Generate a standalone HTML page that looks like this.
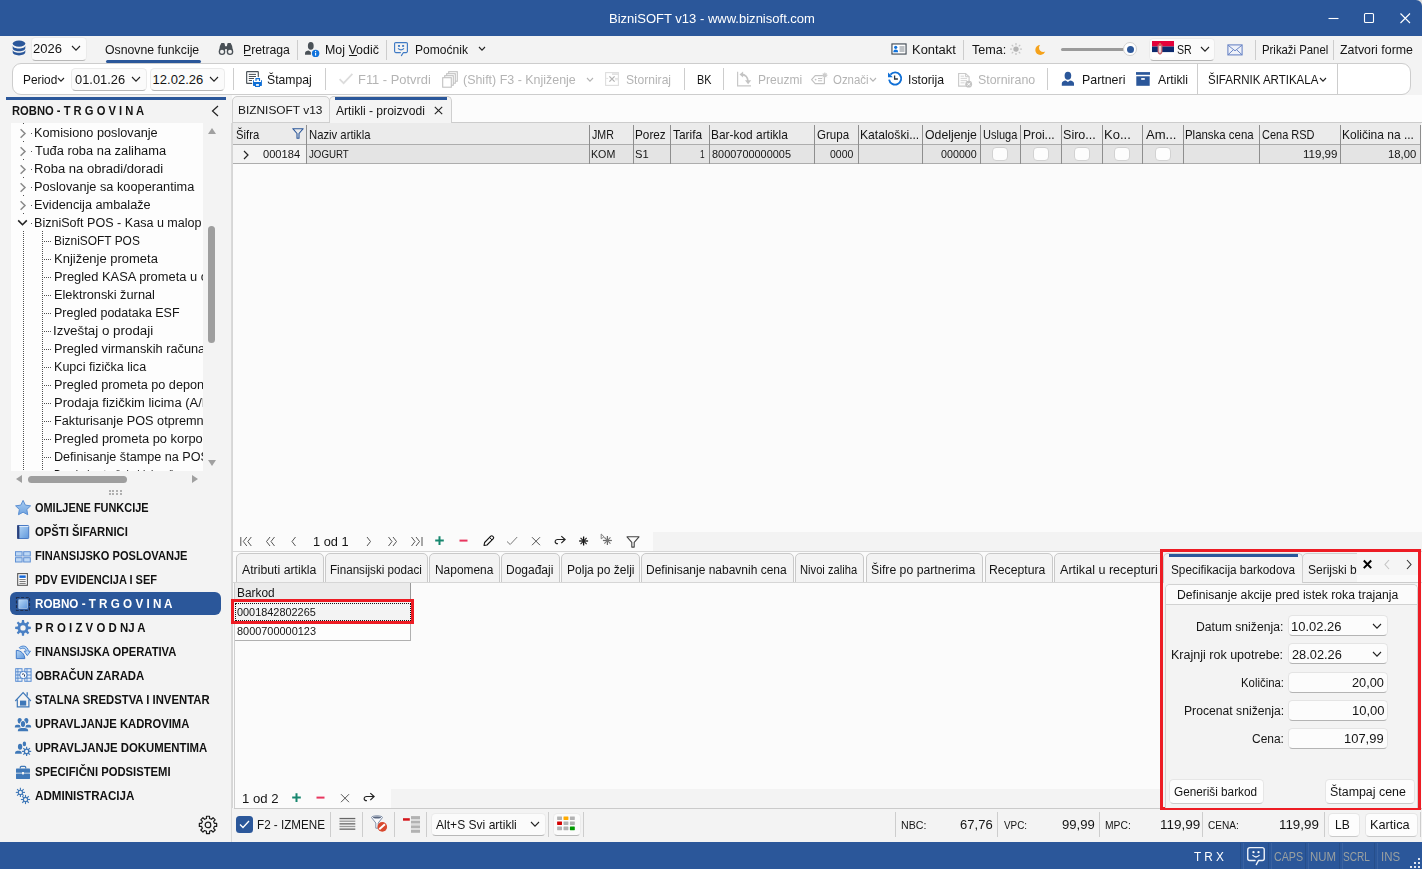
<!DOCTYPE html>
<html lang="sr"><head><meta charset="utf-8"><title>BizniSOFT v13 - www.biznisoft.com</title>
<style>
html,body{margin:0;padding:0;}
body{width:1422px;height:869px;overflow:hidden;background:#f3f3f3;position:relative;font-family:"Liberation Sans",sans-serif;}
div,span.t,svg{position:absolute;box-sizing:border-box;}
span.t{white-space:pre;line-height:16px;transform-origin:0 50%;display:block;}
.cb{background:#fbfbfb;border:1px solid #ebebeb;border-bottom-color:#b8b8b8;border-radius:4.5px;}
.vs{background:#cdcdcd;width:1px;}
</style></head>
<body>
<div style="left:1414px;top:0px;width:8px;height:8px;background:#dedede;"></div>
<div style="left:0px;top:0px;width:1422px;height:36px;background:#2b579a;border-radius:0 6px 0 0;"></div>
<span class="t" style="left:609.05px;top:11.00px;font:normal 13px/16px 'Liberation Sans',sans-serif;color:#ffffff;transform:scaleX(1.0015);">BizniSOFT v13 - www.biznisoft.com</span>
<svg style="left:1320px;top:6px" width="100" height="24" viewBox="0 0 100 24"><g stroke="#fff" stroke-width="1.1" fill="none"><path d="M8.5 12.5h10"/><rect x="44.5" y="7.5" width="9" height="9" rx="1"/><path d="M80.5 7.5l9.5 9.5M90 7.5l-9.5 9.5"/></g></svg>
<svg style="left:12px;top:40px" width="14" height="16" viewBox="0 0 14 16"><g fill="#2b579a"><ellipse cx="7" cy="3.6" rx="6.3" ry="3.1"/><path d="M.7 5.6v2.6c0 1.7 2.8 3 6.3 3s6.3-1.3 6.3-3V5.6c0 1.7-2.8 3-6.3 3S.7 7.300.7 5.600z"/><path d="M.7 9.800v2.500c0 1.700 2.800 3.100 6.300 3.100s6.300-1.400 6.300-3.100V9.800c0 1.700-2.800 3-6.300 3S.7 11.500.7 9.800z"/></g></svg>
<div class="cb" style="left:30.5px;top:37px;width:56px;height:23.7px;"></div>
<span class="t" style="left:33.41px;top:41.00px;font:normal 13px/16px 'Liberation Sans',sans-serif;color:#141414;transform:scaleX(0.9997);">2026</span>
<svg style="left:71px;top:45px" width="10" height="7" viewBox="0 0 10 7"><path d="M1 1l4 4.200 4-4.200" stroke="#222" stroke-width="1.100" fill="none"/></svg>
<span class="t" style="left:105.40px;top:42.00px;font:normal 13px/16px 'Liberation Sans',sans-serif;color:#141414;transform:scaleX(0.9445);">Osnovne funkcije</span>
<div style="left:106px;top:60px;width:95px;height:3px;background:#2b579a;border-radius:1.500px;"></div>
<span class="t" style="left:242.54px;top:42.00px;font:normal 13px/16px 'Liberation Sans',sans-serif;color:#141414;transform:scaleX(0.9400);">Pretraga</span>
<div style="left:244px;top:55px;width:7px;height:1px;background:#1a1a1a;"></div>
<div class="vs" style="left:297px;top:40px;width:1px;height:20px;"></div>
<span class="t" style="left:325.48px;top:42.00px;font:normal 13px/16px 'Liberation Sans',sans-serif;color:#141414;transform:scaleX(0.9555);">Moj Vodič</span>
<div style="left:349px;top:55px;width:8px;height:1px;background:#1a1a1a;"></div>
<div class="vs" style="left:386px;top:40px;width:1px;height:20px;"></div>
<span class="t" style="left:414.65px;top:42.00px;font:normal 13px/16px 'Liberation Sans',sans-serif;color:#141414;transform:scaleX(0.9269);">Pomoćnik</span>
<svg style="left:478px;top:46px" width="8" height="6" viewBox="0 0 8 6"><path d="M1 1l3 3.200 3-3.200" stroke="#222" stroke-width="1.100" fill="none"/></svg>
<span class="t" style="left:912.39px;top:42.00px;font:normal 13px/16px 'Liberation Sans',sans-serif;color:#141414;transform:scaleX(0.9954);">Kontakt</span>
<div class="vs" style="left:963px;top:40px;width:1px;height:20px;"></div>
<span class="t" style="left:971.50px;top:42.00px;font:normal 13px/16px 'Liberation Sans',sans-serif;color:#141414;transform:scaleX(0.9709);">Tema:</span>
<div style="left:1061px;top:47.5px;width:64px;height:3px;background:#9a9a9a;border-radius:1.500px;"></div>
<div style="left:1123px;top:42px;width:14px;height:14px;background:#fff;border:1px solid #d0d0d0;border-radius:7px;"></div>
<div style="left:1126.5px;top:45.5px;width:7px;height:7px;background:#2b579a;border-radius:4px;"></div>
<div class="cb" style="left:1148.5px;top:37.5px;width:66.7px;height:23.9px;"></div>
<span class="t" style="left:1176.92px;top:42.00px;font:normal 13px/16px 'Liberation Sans',sans-serif;color:#141414;transform:scaleX(0.8168);">SR</span>
<svg style="left:1200px;top:46px" width="10" height="7" viewBox="0 0 10 7"><path d="M1 1l4 4.200 4-4.200" stroke="#222" stroke-width="1.100" fill="none"/></svg>
<div class="vs" style="left:1255px;top:40px;width:1px;height:20px;"></div>
<span class="t" style="left:1261.79px;top:42.00px;font:normal 13px/16px 'Liberation Sans',sans-serif;color:#141414;transform:scaleX(0.8736);">Prikaži Panel</span>
<div class="vs" style="left:1333px;top:40px;width:1px;height:20px;"></div>
<span class="t" style="left:1340.16px;top:42.00px;font:normal 13px/16px 'Liberation Sans',sans-serif;color:#141414;transform:scaleX(0.9529);">Zatvori forme</span>
<div style="left:12px;top:63px;width:1399px;height:32px;background:#fff;border:1px solid #cdcdcd;border-radius:9px;"></div>
<span class="t" style="left:22.67px;top:72.00px;font:normal 13px/16px 'Liberation Sans',sans-serif;color:#141414;transform:scaleX(0.9113);">Period</span>
<svg style="left:57px;top:77px" width="8" height="6" viewBox="0 0 8 6"><path d="M1 1l3 3.200 3-3.200" stroke="#222" stroke-width="1.100" fill="none"/></svg>
<div class="cb" style="left:71px;top:67.5px;width:75.5px;height:23px;"></div>
<span class="t" style="left:74.61px;top:72.00px;font:normal 13px/16px 'Liberation Sans',sans-serif;color:#141414;transform:scaleX(0.9904);">01.01.26</span>
<svg style="left:131px;top:76px" width="10" height="7" viewBox="0 0 10 7"><path d="M1 1l4 4.200 4-4.200" stroke="#222" stroke-width="1.100" fill="none"/></svg>
<div class="cb" style="left:149.5px;top:67.5px;width:75.5px;height:23px;"></div>
<span class="t" style="left:152.60px;top:72.00px;font:normal 13px/16px 'Liberation Sans',sans-serif;color:#141414;transform:scaleX(1.0000);">12.02.26</span>
<svg style="left:209px;top:76px" width="10" height="7" viewBox="0 0 10 7"><path d="M1 1l4 4.200 4-4.200" stroke="#222" stroke-width="1.100" fill="none"/></svg>
<div class="vs" style="left:233px;top:68px;width:1px;height:22px;"></div>
<span class="t" style="left:266.94px;top:72.00px;font:normal 13px/16px 'Liberation Sans',sans-serif;color:#141414;transform:scaleX(0.9396);">Štampaj</span>
<div class="vs" style="left:325px;top:68px;width:1px;height:22px;"></div>
<span class="t" style="left:358.41px;top:72.00px;font:normal 13px/16px 'Liberation Sans',sans-serif;color:#b4b4b4;transform:scaleX(0.9917);">F11 - Potvrdi</span>
<span class="t" style="left:462.62px;top:72.00px;font:normal 13px/16px 'Liberation Sans',sans-serif;color:#b4b4b4;transform:scaleX(0.9577);">(Shift) F3 - Knjiženje</span>
<svg style="left:586px;top:77px" width="8" height="6" viewBox="0 0 8 6"><path d="M1 1l3 3.200 3-3.200" stroke="#b4b4b4" stroke-width="1.100" fill="none"/></svg>
<span class="t" style="left:625.68px;top:72.00px;font:normal 13px/16px 'Liberation Sans',sans-serif;color:#b4b4b4;transform:scaleX(0.9309);">Storniraj</span>
<div class="vs" style="left:684px;top:68px;width:1px;height:22px;"></div>
<span class="t" style="left:696.86px;top:72.00px;font:normal 13px/16px 'Liberation Sans',sans-serif;color:#141414;transform:scaleX(0.8327);">BK</span>
<div class="vs" style="left:723px;top:68px;width:1px;height:22px;"></div>
<span class="t" style="left:757.66px;top:72.00px;font:normal 13px/16px 'Liberation Sans',sans-serif;color:#b4b4b4;transform:scaleX(0.9256);">Preuzmi</span>
<span class="t" style="left:832.55px;top:72.00px;font:normal 13px/16px 'Liberation Sans',sans-serif;color:#b4b4b4;transform:scaleX(0.8798);">Označi</span>
<svg style="left:869px;top:77px" width="8" height="6" viewBox="0 0 8 6"><path d="M1 1l3 3.200 3-3.200" stroke="#b4b4b4" stroke-width="1.100" fill="none"/></svg>
<span class="t" style="left:907.84px;top:72.00px;font:normal 13px/16px 'Liberation Sans',sans-serif;color:#141414;transform:scaleX(0.9408);">Istorija</span>
<span class="t" style="left:977.56px;top:72.00px;font:normal 13px/16px 'Liberation Sans',sans-serif;color:#b4b4b4;transform:scaleX(0.9529);">Stornirano</span>
<div class="vs" style="left:1047px;top:68px;width:1px;height:22px;"></div>
<span class="t" style="left:1081.57px;top:72.00px;font:normal 13px/16px 'Liberation Sans',sans-serif;color:#141414;transform:scaleX(0.9530);">Partneri</span>
<span class="t" style="left:1157.58px;top:72.00px;font:normal 13px/16px 'Liberation Sans',sans-serif;color:#141414;transform:scaleX(0.9447);">Artikli</span>
<div class="vs" style="left:1197px;top:64px;width:1px;height:30px;"></div>
<span class="t" style="left:1207.81px;top:72.00px;font:normal 13px/16px 'Liberation Sans',sans-serif;color:#141414;transform:scaleX(0.8843);">ŠIFARNIK ARTIKALA</span>
<svg style="left:1319px;top:77px" width="8" height="6" viewBox="0 0 8 6"><path d="M1 1l3 3.200 3-3.200" stroke="#222" stroke-width="1.100" fill="none"/></svg>
<div class="vs" style="left:1337px;top:64px;width:1px;height:30px;"></div>
<div style="left:5.5px;top:97px;width:220.5px;height:2.6px;background:#2b579a;"></div>
<span class="t" style="left:11.92px;top:103.00px;font:bold 12.5px/16px 'Liberation Sans',sans-serif;color:#141414;transform:scaleX(0.8961);">ROBNO - T R G O V I N A</span>
<svg style="left:210px;top:104px" width="10" height="14" viewBox="0 0 10 14"><path d="M8 2L2.500 7 8 12" stroke="#222" stroke-width="1.200" fill="none"/></svg>
<div style="left:11px;top:123px;width:192px;height:348px;background:#fdfdfd;"></div>
<div style="left:23px;top:123px;width:1px;height:348px;background:repeating-linear-gradient(to bottom,#505050 0 1px,transparent 1px 2px);"></div>
<div style="left:42px;top:231px;width:1px;height:240px;background:repeating-linear-gradient(to bottom,#505050 0 1px,transparent 1px 2px);"></div>
<div style="left:16px;top:125px;width:15px;height:16px;background:#fdfdfd;"></div>
<svg style="left:19px;top:128px" width="8" height="11" viewBox="0 0 8 11"><path d="M1.600 1.200L6 5.500 1.600 9.800" stroke="#8a8a8a" stroke-width="1.500" fill="none"/></svg>
<div style="left:31px;top:133px;width:1px;height:1px;background:#505050;"></div>
<span class="t" style="left:34.39px;top:125.00px;font:normal 12.5px/16px 'Liberation Sans',sans-serif;color:#141414;transform:scaleX(1.0171);">Komisiono poslovanje</span>
<div style="left:16px;top:143px;width:15px;height:16px;background:#fdfdfd;"></div>
<svg style="left:19px;top:146px" width="8" height="11" viewBox="0 0 8 11"><path d="M1.600 1.200L6 5.500 1.600 9.800" stroke="#8a8a8a" stroke-width="1.500" fill="none"/></svg>
<div style="left:31px;top:151px;width:1px;height:1px;background:#505050;"></div>
<span class="t" style="left:35.46px;top:143.00px;font:normal 12.5px/16px 'Liberation Sans',sans-serif;color:#141414;transform:scaleX(1.0291);">Tuđa roba na zalihama</span>
<div style="left:16px;top:161px;width:15px;height:16px;background:#fdfdfd;"></div>
<svg style="left:19px;top:164px" width="8" height="11" viewBox="0 0 8 11"><path d="M1.600 1.200L6 5.500 1.600 9.800" stroke="#8a8a8a" stroke-width="1.500" fill="none"/></svg>
<div style="left:31px;top:169px;width:1px;height:1px;background:#505050;"></div>
<span class="t" style="left:34.34px;top:161.00px;font:normal 12.5px/16px 'Liberation Sans',sans-serif;color:#141414;transform:scaleX(1.0435);">Roba na obradi/doradi</span>
<div style="left:16px;top:179px;width:15px;height:16px;background:#fdfdfd;"></div>
<svg style="left:19px;top:182px" width="8" height="11" viewBox="0 0 8 11"><path d="M1.600 1.200L6 5.500 1.600 9.800" stroke="#8a8a8a" stroke-width="1.500" fill="none"/></svg>
<div style="left:31px;top:187px;width:1px;height:1px;background:#505050;"></div>
<span class="t" style="left:34.40px;top:179.00px;font:normal 12.5px/16px 'Liberation Sans',sans-serif;color:#141414;transform:scaleX(1.0208);">Poslovanje sa kooperantima</span>
<div style="left:16px;top:197px;width:15px;height:16px;background:#fdfdfd;"></div>
<svg style="left:19px;top:200px" width="8" height="11" viewBox="0 0 8 11"><path d="M1.600 1.200L6 5.500 1.600 9.800" stroke="#8a8a8a" stroke-width="1.500" fill="none"/></svg>
<div style="left:31px;top:205px;width:1px;height:1px;background:#505050;"></div>
<span class="t" style="left:34.45px;top:197.00px;font:normal 12.5px/16px 'Liberation Sans',sans-serif;color:#141414;transform:scaleX(1.0173);">Evidencija ambalaže</span>
<div style="left:16px;top:215px;width:15px;height:16px;background:#fdfdfd;"></div>
<svg style="left:17px;top:219px" width="11" height="8" viewBox="0 0 11 8"><path d="M1.200 1.400l4.300 4.300 4.300-4.300" stroke="#222" stroke-width="1.600" fill="none"/></svg>
<div style="left:31px;top:223px;width:1px;height:1px;background:#505050;"></div>
<div style="left:33.5px;top:215.00px;width:168.5px;height:16px;overflow:hidden;"><span class="t" style="left:0.96px;top:0;font:normal 12.5px/16px 'Liberation Sans',sans-serif;color:#141414;transform:scaleX(1.0051);">BizniSoft POS - Kasa u maloprodaji</span></div>
<div style="left:44px;top:241px;width:8px;height:1px;background:repeating-linear-gradient(to right,#505050 0 1px,transparent 1px 2px);"></div>
<div style="left:52.9px;top:233.00px;width:150.1px;height:16px;overflow:hidden;"><span class="t" style="left:1.34px;top:0;font:normal 12.5px/16px 'Liberation Sans',sans-serif;color:#141414;transform:scaleX(0.9530);">BizniSOFT POS</span></div>
<div style="left:44px;top:259px;width:8px;height:1px;background:repeating-linear-gradient(to right,#505050 0 1px,transparent 1px 2px);"></div>
<div style="left:52.9px;top:251.00px;width:150.1px;height:16px;overflow:hidden;"><span class="t" style="left:1.03px;top:0;font:normal 12.5px/16px 'Liberation Sans',sans-serif;color:#141414;transform:scaleX(1.0385);">Knjiženje prometa</span></div>
<div style="left:44px;top:277px;width:8px;height:1px;background:repeating-linear-gradient(to right,#505050 0 1px,transparent 1px 2px);"></div>
<div style="left:52.9px;top:269.00px;width:150.1px;height:16px;overflow:hidden;"><span class="t" style="left:1.06px;top:0;font:normal 12.5px/16px 'Liberation Sans',sans-serif;color:#141414;transform:scaleX(1.0300);">Pregled KASA prometa u objektu</span></div>
<div style="left:44px;top:295px;width:8px;height:1px;background:repeating-linear-gradient(to right,#505050 0 1px,transparent 1px 2px);"></div>
<div style="left:52.9px;top:287.00px;width:150.1px;height:16px;overflow:hidden;"><span class="t" style="left:1.12px;top:0;font:normal 12.5px/16px 'Liberation Sans',sans-serif;color:#141414;transform:scaleX(1.0233);">Elektronski žurnal</span></div>
<div style="left:44px;top:313px;width:8px;height:1px;background:repeating-linear-gradient(to right,#505050 0 1px,transparent 1px 2px);"></div>
<div style="left:52.9px;top:305.00px;width:150.1px;height:16px;overflow:hidden;"><span class="t" style="left:1.17px;top:0;font:normal 12.5px/16px 'Liberation Sans',sans-serif;color:#141414;transform:scaleX(0.9983);">Pregled podataka ESF</span></div>
<div style="left:44px;top:331px;width:8px;height:1px;background:repeating-linear-gradient(to right,#505050 0 1px,transparent 1px 2px);"></div>
<div style="left:52.9px;top:323.00px;width:150.1px;height:16px;overflow:hidden;"><span class="t" style="left:0.47px;top:0;font:normal 12.5px/16px 'Liberation Sans',sans-serif;color:#141414;transform:scaleX(1.0678);">Izveštaj o prodaji</span></div>
<div style="left:44px;top:349px;width:8px;height:1px;background:repeating-linear-gradient(to right,#505050 0 1px,transparent 1px 2px);"></div>
<div style="left:52.9px;top:341.00px;width:150.1px;height:16px;overflow:hidden;"><span class="t" style="left:1.13px;top:0;font:normal 12.5px/16px 'Liberation Sans',sans-serif;color:#141414;transform:scaleX(1.0217);">Pregled virmanskih računa</span></div>
<div style="left:44px;top:367px;width:8px;height:1px;background:repeating-linear-gradient(to right,#505050 0 1px,transparent 1px 2px);"></div>
<div style="left:52.9px;top:359.00px;width:150.1px;height:16px;overflow:hidden;"><span class="t" style="left:1.09px;top:0;font:normal 12.5px/16px 'Liberation Sans',sans-serif;color:#141414;transform:scaleX(1.0047);">Kupci fizička lica</span></div>
<div style="left:44px;top:385px;width:8px;height:1px;background:repeating-linear-gradient(to right,#505050 0 1px,transparent 1px 2px);"></div>
<div style="left:52.9px;top:377.00px;width:150.1px;height:16px;overflow:hidden;"><span class="t" style="left:1.16px;top:0;font:normal 12.5px/16px 'Liberation Sans',sans-serif;color:#141414;transform:scaleX(1.0140);">Pregled prometa po deponentima</span></div>
<div style="left:44px;top:403px;width:8px;height:1px;background:repeating-linear-gradient(to right,#505050 0 1px,transparent 1px 2px);"></div>
<div style="left:52.9px;top:395.00px;width:150.1px;height:16px;overflow:hidden;"><span class="t" style="left:1.05px;top:0;font:normal 12.5px/16px 'Liberation Sans',sans-serif;color:#141414;transform:scaleX(1.0382);">Prodaja fizičkim licima (A/B)</span></div>
<div style="left:44px;top:421px;width:8px;height:1px;background:repeating-linear-gradient(to right,#505050 0 1px,transparent 1px 2px);"></div>
<div style="left:52.9px;top:413.00px;width:150.1px;height:16px;overflow:hidden;"><span class="t" style="left:1.15px;top:0;font:normal 12.5px/16px 'Liberation Sans',sans-serif;color:#141414;transform:scaleX(1.0163);">Fakturisanje POS otpremnica</span></div>
<div style="left:44px;top:439px;width:8px;height:1px;background:repeating-linear-gradient(to right,#505050 0 1px,transparent 1px 2px);"></div>
<div style="left:52.9px;top:431.00px;width:150.1px;height:16px;overflow:hidden;"><span class="t" style="left:1.06px;top:0;font:normal 12.5px/16px 'Liberation Sans',sans-serif;color:#141414;transform:scaleX(1.0293);">Pregled prometa po korporativnim</span></div>
<div style="left:44px;top:457px;width:8px;height:1px;background:repeating-linear-gradient(to right,#505050 0 1px,transparent 1px 2px);"></div>
<div style="left:52.9px;top:449.00px;width:150.1px;height:16px;overflow:hidden;"><span class="t" style="left:1.16px;top:0;font:normal 12.5px/16px 'Liberation Sans',sans-serif;color:#141414;transform:scaleX(1.0084);">Definisanje štampe na POS</span></div>
<div style="left:44px;top:475px;width:8px;height:1px;background:repeating-linear-gradient(to right,#505050 0 1px,transparent 1px 2px);"></div>
<div style="left:52.9px;top:467.00px;width:150.1px;height:16px;overflow:hidden;"><span class="t" style="left:1.43px;top:0;font:normal 12.5px/16px 'Liberation Sans',sans-serif;color:#141414;transform:scaleX(0.8203);">Pregled potrošnje blok-računa</span></div>
<div style="left:0px;top:471px;width:232px;height:20px;background:#f3f3f3;"></div>
<svg style="left:207px;top:127px" width="10" height="8" viewBox="0 0 10 8"><path d="M5 1L9 7H1z" fill="#a0a0a0"/></svg>
<div style="left:208px;top:226px;width:7px;height:117px;background:#9e9e9e;border-radius:3.500px;"></div>
<svg style="left:207px;top:459px" width="10" height="8" viewBox="0 0 10 8"><path d="M5 7L9 1H1z" fill="#a0a0a0"/></svg>
<svg style="left:15px;top:474px" width="8" height="10" viewBox="0 0 8 10"><path d="M1 5L7 1v8z" fill="#a0a0a0"/></svg>
<div style="left:28px;top:476px;width:99px;height:7px;background:#9e9e9e;border-radius:3.500px;"></div>
<svg style="left:191px;top:474px" width="8" height="10" viewBox="0 0 8 10"><path d="M7 5L1 1v8z" fill="#a0a0a0"/></svg>
<div style="left:108.5px;top:489.5px;width:2px;height:2px;background:#b0b0b0;"></div>
<div style="left:108.5px;top:493.0px;width:2px;height:2px;background:#b0b0b0;"></div>
<div style="left:112.2px;top:489.5px;width:2px;height:2px;background:#b0b0b0;"></div>
<div style="left:112.2px;top:493.0px;width:2px;height:2px;background:#b0b0b0;"></div>
<div style="left:115.9px;top:489.5px;width:2px;height:2px;background:#b0b0b0;"></div>
<div style="left:115.9px;top:493.0px;width:2px;height:2px;background:#b0b0b0;"></div>
<div style="left:119.6px;top:489.5px;width:2px;height:2px;background:#b0b0b0;"></div>
<div style="left:119.6px;top:493.0px;width:2px;height:2px;background:#b0b0b0;"></div>
<span class="t" style="left:34.95px;top:500.00px;font:bold 13px/16px 'Liberation Sans',sans-serif;color:#111;transform:scaleX(0.8405);">OMILJENE FUNKCIJE</span>
<span class="t" style="left:34.91px;top:524.00px;font:bold 13px/16px 'Liberation Sans',sans-serif;color:#111;transform:scaleX(0.8682);">OPŠTI ŠIFARNICI</span>
<span class="t" style="left:34.95px;top:548.00px;font:bold 13px/16px 'Liberation Sans',sans-serif;color:#111;transform:scaleX(0.8520);">FINANSIJSKO POSLOVANJE</span>
<span class="t" style="left:34.95px;top:572.00px;font:bold 13px/16px 'Liberation Sans',sans-serif;color:#111;transform:scaleX(0.8475);">PDV EVIDENCIJA I SEF</span>
<div style="left:10px;top:592px;width:211px;height:23px;background:#2b579a;border-radius:6px;"></div>
<span class="t" style="left:34.83px;top:596.00px;font:bold 13px/16px 'Liberation Sans',sans-serif;color:#fff;transform:scaleX(0.8969);">ROBNO - T R G O V I N A</span>
<span class="t" style="left:34.86px;top:620.00px;font:bold 13px/16px 'Liberation Sans',sans-serif;color:#111;transform:scaleX(0.8797);">P R O I Z V O D NJ A</span>
<span class="t" style="left:34.92px;top:644.00px;font:bold 13px/16px 'Liberation Sans',sans-serif;color:#111;transform:scaleX(0.8635);">FINANSIJSKA OPERATIVA</span>
<span class="t" style="left:34.91px;top:668.00px;font:bold 13px/16px 'Liberation Sans',sans-serif;color:#111;transform:scaleX(0.8748);">OBRAČUN ZARADA</span>
<span class="t" style="left:35.09px;top:692.00px;font:bold 13px/16px 'Liberation Sans',sans-serif;color:#111;transform:scaleX(0.8704);">STALNA SREDSTVA I INVENTAR</span>
<span class="t" style="left:35.20px;top:716.00px;font:bold 13px/16px 'Liberation Sans',sans-serif;color:#111;transform:scaleX(0.8661);">UPRAVLJANJE KADROVIMA</span>
<span class="t" style="left:35.15px;top:740.00px;font:bold 13px/16px 'Liberation Sans',sans-serif;color:#111;transform:scaleX(0.8746);">UPRAVLJANJE DOKUMENTIMA</span>
<span class="t" style="left:35.15px;top:764.00px;font:bold 13px/16px 'Liberation Sans',sans-serif;color:#111;transform:scaleX(0.8650);">SPECIFIČNI PODSISTEMI</span>
<span class="t" style="left:34.95px;top:788.00px;font:bold 13px/16px 'Liberation Sans',sans-serif;color:#111;transform:scaleX(0.8936);">ADMINISTRACIJA</span>
<div style="left:231px;top:123px;width:1px;height:719px;background:#d9d9d9;"></div>
<div style="left:0px;top:841.5px;width:1422px;height:28px;background:#2b579a;"></div>
<div style="left:232px;top:122px;width:1190px;height:688px;background:#fbfbfb;border-left:1px solid #d6d6d6;border-top:1px solid #d6d6d6;"></div>
<div style="left:232px;top:95px;width:1190px;height:28px;background:#fcfcfc;"></div>
<div style="left:232px;top:122px;width:1190px;height:1px;background:#cccccc;"></div>
<div style="left:232px;top:96px;width:98px;height:27px;background:#f4f4f4;border:1px solid #cfcfcf;border-radius:5px 5px 0 0;"></div>
<span class="t" style="left:237.62px;top:102.00px;font:normal 11.8px/16px 'Liberation Sans',sans-serif;color:#141414;transform:scaleX(1.0085);">BIZNISOFT v13</span>
<div style="left:329px;top:96px;width:123px;height:27px;background:#f4f4f4;border:1px solid #cfcfcf;border-bottom:none;border-radius:5px 5px 0 0;"></div>
<div style="left:334.5px;top:97px;width:112.5px;height:3px;background:#2b579a;"></div>
<span class="t" style="left:335.54px;top:103.00px;font:normal 12.5px/16px 'Liberation Sans',sans-serif;color:#141414;transform:scaleX(0.9688);">Artikli - proizvodi</span>
<svg style="left:433px;top:105px" width="11" height="11" viewBox="0 0 11 11"><path d="M1.800 1.800l7.400 7.400M9.200 1.800l-7.400 7.400" stroke="#222" stroke-width="1.100" fill="none"/></svg>
<div style="left:233px;top:123px;width:1188px;height:21px;background:#ebebeb;"></div>
<div style="left:233px;top:144px;width:1188px;height:1px;background:#adadad;"></div>
<div style="left:233px;top:145px;width:1188px;height:18px;background:#e4e4e4;"></div>
<div style="left:233px;top:145px;width:73px;height:18px;background:#f3f3f3;"></div>
<div style="left:233px;top:163px;width:1188px;height:1px;background:#adadad;"></div>
<div style="left:306px;top:125px;width:1px;height:39px;background:#8e8e8e;"></div>
<div style="left:589px;top:125px;width:1px;height:39px;background:#8e8e8e;"></div>
<div style="left:633px;top:125px;width:1px;height:39px;background:#8e8e8e;"></div>
<div style="left:670px;top:125px;width:1px;height:39px;background:#8e8e8e;"></div>
<div style="left:709px;top:125px;width:1px;height:39px;background:#8e8e8e;"></div>
<div style="left:814px;top:125px;width:1px;height:39px;background:#8e8e8e;"></div>
<div style="left:858px;top:125px;width:1px;height:39px;background:#8e8e8e;"></div>
<div style="left:922px;top:125px;width:1px;height:39px;background:#8e8e8e;"></div>
<div style="left:980px;top:125px;width:1px;height:39px;background:#8e8e8e;"></div>
<div style="left:1020px;top:125px;width:1px;height:39px;background:#8e8e8e;"></div>
<div style="left:1061px;top:125px;width:1px;height:39px;background:#8e8e8e;"></div>
<div style="left:1102px;top:125px;width:1px;height:39px;background:#8e8e8e;"></div>
<div style="left:1142px;top:125px;width:1px;height:39px;background:#8e8e8e;"></div>
<div style="left:1183px;top:125px;width:1px;height:39px;background:#8e8e8e;"></div>
<div style="left:1259px;top:125px;width:1px;height:39px;background:#8e8e8e;"></div>
<div style="left:1340px;top:125px;width:1px;height:39px;background:#8e8e8e;"></div>
<div style="left:1420px;top:125px;width:1px;height:39px;background:#8e8e8e;"></div>
<span class="t" style="left:235.83px;top:127.00px;font:normal 12.4px/16px 'Liberation Sans',sans-serif;color:#141414;transform:scaleX(0.9090);">Šifra</span>
<span class="t" style="left:309.42px;top:127.00px;font:normal 12.4px/16px 'Liberation Sans',sans-serif;color:#141414;transform:scaleX(0.9107);">Naziv artikla</span>
<span class="t" style="left:592.29px;top:127.00px;font:normal 12.4px/16px 'Liberation Sans',sans-serif;color:#141414;transform:scaleX(0.8582);">JMR</span>
<span class="t" style="left:634.86px;top:127.00px;font:normal 12.4px/16px 'Liberation Sans',sans-serif;color:#141414;transform:scaleX(0.9495);">Porez</span>
<span class="t" style="left:673.39px;top:127.00px;font:normal 12.4px/16px 'Liberation Sans',sans-serif;color:#141414;transform:scaleX(0.9605);">Tarifa</span>
<span class="t" style="left:710.85px;top:127.00px;font:normal 12.4px/16px 'Liberation Sans',sans-serif;color:#141414;transform:scaleX(0.9611);">Bar-kod artikla</span>
<span class="t" style="left:816.61px;top:127.00px;font:normal 12.4px/16px 'Liberation Sans',sans-serif;color:#141414;transform:scaleX(0.9304);">Grupa</span>
<span class="t" style="left:860.24px;top:127.00px;font:normal 12.4px/16px 'Liberation Sans',sans-serif;color:#141414;transform:scaleX(0.9772);">Kataloški...</span>
<span class="t" style="left:924.68px;top:127.00px;font:normal 12.4px/16px 'Liberation Sans',sans-serif;color:#141414;transform:scaleX(0.9917);">Odeljenje</span>
<span class="t" style="left:982.73px;top:127.00px;font:normal 12.4px/16px 'Liberation Sans',sans-serif;color:#141414;transform:scaleX(0.8895);">Usluga</span>
<span class="t" style="left:1022.52px;top:127.00px;font:normal 12.4px/16px 'Liberation Sans',sans-serif;color:#141414;transform:scaleX(0.9798);">Proi...</span>
<span class="t" style="left:1063.08px;top:127.00px;font:normal 12.4px/16px 'Liberation Sans',sans-serif;color:#141414;transform:scaleX(1.0140);">Siro...</span>
<span class="t" style="left:1104.44px;top:127.00px;font:normal 12.4px/16px 'Liberation Sans',sans-serif;color:#141414;transform:scaleX(1.0499);">Ko...</span>
<span class="t" style="left:1145.70px;top:127.00px;font:normal 12.4px/16px 'Liberation Sans',sans-serif;color:#141414;transform:scaleX(1.0550);">Am...</span>
<span class="t" style="left:1185.24px;top:127.00px;font:normal 12.4px/16px 'Liberation Sans',sans-serif;color:#141414;transform:scaleX(0.9224);">Planska cena</span>
<span class="t" style="left:1261.78px;top:127.00px;font:normal 12.4px/16px 'Liberation Sans',sans-serif;color:#141414;transform:scaleX(0.8860);">Cena RSD</span>
<span class="t" style="left:1342.46px;top:127.00px;font:normal 12.4px/16px 'Liberation Sans',sans-serif;color:#141414;transform:scaleX(0.9662);">Količina na ...</span>
<span class="t" style="left:263.05px;top:146.00px;font:normal 10.8px/16px 'Liberation Sans',sans-serif;color:#141414;transform:scaleX(1.0285);">000184</span>
<span class="t" style="left:309.33px;top:146.00px;font:normal 10.8px/16px 'Liberation Sans',sans-serif;color:#141414;transform:scaleX(0.8990);">JOGURT</span>
<span class="t" style="left:590.94px;top:146.00px;font:normal 10.8px/16px 'Liberation Sans',sans-serif;color:#141414;transform:scaleX(0.9893);">KOM</span>
<span class="t" style="left:635.11px;top:146.00px;font:normal 10.8px/16px 'Liberation Sans',sans-serif;color:#141414;transform:scaleX(1.0338);">S1</span>
<span class="t" style="left:700.47px;top:146.00px;font:normal 10.8px/16px 'Liberation Sans',sans-serif;color:#141414;transform:scaleX(0.7716);">1</span>
<span class="t" style="left:711.78px;top:146.00px;font:normal 10.8px/16px 'Liberation Sans',sans-serif;color:#141414;transform:scaleX(1.0119);">8000700000005</span>
<span class="t" style="left:830.42px;top:146.00px;font:normal 10.8px/16px 'Liberation Sans',sans-serif;color:#141414;transform:scaleX(0.9704);">0000</span>
<span class="t" style="left:940.91px;top:146.00px;font:normal 10.8px/16px 'Liberation Sans',sans-serif;color:#141414;transform:scaleX(0.9925);">000000</span>
<span class="t" style="left:1302.79px;top:146.00px;font:normal 10.8px/16px 'Liberation Sans',sans-serif;color:#141414;transform:scaleX(1.0691);">119,99</span>
<span class="t" style="left:1387.72px;top:146.00px;font:normal 10.8px/16px 'Liberation Sans',sans-serif;color:#141414;transform:scaleX(1.0455);">18,00</span>
<svg style="left:292px;top:128px" width="12" height="11" viewBox="0 0 12 11"><path d="M.8.700h10.400L7 5.500v4.800H5V5.500z" stroke="#2b579a" stroke-width="1.100" fill="none" stroke-linejoin="round"/></svg>
<svg style="left:242px;top:150px" width="8" height="10" viewBox="0 0 8 10"><path d="M2 1l4 4-4 4" stroke="#222" stroke-width="1.200" fill="none"/></svg>
<div style="left:992.3px;top:147px;width:15.5px;height:13.5px;background:#fdfdfd;border:1px solid #d2d2d2;border-radius:4px;"></div>
<div style="left:1033px;top:147px;width:15.5px;height:13.5px;background:#fdfdfd;border:1px solid #d2d2d2;border-radius:4px;"></div>
<div style="left:1074px;top:147px;width:15.5px;height:13.5px;background:#fdfdfd;border:1px solid #d2d2d2;border-radius:4px;"></div>
<div style="left:1114.3px;top:147px;width:15.5px;height:13.5px;background:#fdfdfd;border:1px solid #d2d2d2;border-radius:4px;"></div>
<div style="left:1155.3px;top:147px;width:15.5px;height:13.5px;background:#fdfdfd;border:1px solid #d2d2d2;border-radius:4px;"></div>
<div style="left:233px;top:551px;width:1189px;height:1px;background:#d6d6d6;"></div>
<div style="left:653px;top:532px;width:769px;height:19px;background:#f3f3f3;"></div>
<span class="t" style="left:312.57px;top:534.00px;font:normal 13px/16px 'Liberation Sans',sans-serif;color:#141414;transform:scaleX(0.9837);">1 od 1</span>
<svg style="left:239.5px;top:537px;overflow:visible" width="12" height="9" viewBox="0 0 12 9"><path d="M.8 0v9M6.800 0L3.300 4.500 6.800 9M11.300 0L7.800 4.500 11.300 9" stroke="#555" stroke-width="1" fill="none"/></svg>
<svg style="left:264.5px;top:537px;overflow:visible" width="12" height="9" viewBox="0 0 12 9"><path d="M5 0L1.500 4.500 5 9M9.500 0L6 4.500 9.500 9" stroke="#555" stroke-width="1" fill="none"/></svg>
<svg style="left:290px;top:537px;overflow:visible" width="12" height="9" viewBox="0 0 12 9"><path d="M5.500 0L2 4.500 5.500 9" stroke="#555" stroke-width="1" fill="none"/></svg>
<svg style="left:364.5px;top:537px;overflow:visible" width="12" height="9" viewBox="0 0 12 9"><path d="M2 0l3.500 4.500L2 9" stroke="#555" stroke-width="1" fill="none"/></svg>
<svg style="left:387px;top:537px;overflow:visible" width="12" height="9" viewBox="0 0 12 9"><path d="M1.500 0L5 4.500 1.500 9M6 0l3.500 4.500L6 9" stroke="#555" stroke-width="1" fill="none"/></svg>
<svg style="left:411px;top:537px;overflow:visible" width="12" height="9" viewBox="0 0 12 9"><path d="M.5 0l3.500 4.500L.5 9M5 0L8.500 4.500 5 9M11 0v9" stroke="#555" stroke-width="1" fill="none"/></svg>
<div style="left:236px;top:553px;width:88px;height:30px;background:#f3f3f3;border:1px solid #c9c9c9;border-radius:5px 5px 0 0;"></div>
<span class="t" style="left:242.03px;top:562.00px;font:normal 12.5px/16px 'Liberation Sans',sans-serif;color:#141414;transform:scaleX(0.9824);">Atributi artikla</span>
<div style="left:325px;top:553px;width:103px;height:30px;background:#f3f3f3;border:1px solid #c9c9c9;border-radius:5px 5px 0 0;"></div>
<span class="t" style="left:330.36px;top:562.00px;font:normal 12.5px/16px 'Liberation Sans',sans-serif;color:#141414;transform:scaleX(0.9313);">Finansijski podaci</span>
<div style="left:429px;top:553px;width:71px;height:30px;background:#f3f3f3;border:1px solid #c9c9c9;border-radius:5px 5px 0 0;"></div>
<span class="t" style="left:434.62px;top:562.00px;font:normal 12.5px/16px 'Liberation Sans',sans-serif;color:#141414;transform:scaleX(0.9543);">Napomena</span>
<div style="left:501px;top:553px;width:59px;height:30px;background:#f3f3f3;border:1px solid #c9c9c9;border-radius:5px 5px 0 0;"></div>
<span class="t" style="left:506.11px;top:562.00px;font:normal 12.5px/16px 'Liberation Sans',sans-serif;color:#141414;transform:scaleX(0.9595);">Događaji</span>
<div style="left:561px;top:553px;width:79px;height:30px;background:#f3f3f3;border:1px solid #c9c9c9;border-radius:5px 5px 0 0;"></div>
<span class="t" style="left:566.60px;top:562.00px;font:normal 12.5px/16px 'Liberation Sans',sans-serif;color:#141414;transform:scaleX(0.9618);">Polja po želji</span>
<div style="left:641px;top:553px;width:153px;height:30px;background:#f3f3f3;border:1px solid #c9c9c9;border-radius:5px 5px 0 0;"></div>
<span class="t" style="left:645.80px;top:562.00px;font:normal 12.5px/16px 'Liberation Sans',sans-serif;color:#141414;transform:scaleX(0.9595);">Definisanje nabavnih cena</span>
<div style="left:795px;top:553px;width:69px;height:30px;background:#f3f3f3;border:1px solid #c9c9c9;border-radius:5px 5px 0 0;"></div>
<span class="t" style="left:799.90px;top:562.00px;font:normal 12.5px/16px 'Liberation Sans',sans-serif;color:#141414;transform:scaleX(0.8936);">Nivoi zaliha</span>
<div style="left:866px;top:553px;width:117px;height:30px;background:#f3f3f3;border:1px solid #c9c9c9;border-radius:5px 5px 0 0;"></div>
<span class="t" style="left:871.31px;top:562.00px;font:normal 12.5px/16px 'Liberation Sans',sans-serif;color:#141414;transform:scaleX(0.9805);">Šifre po partnerima</span>
<div style="left:985px;top:553px;width:68px;height:30px;background:#f3f3f3;border:1px solid #c9c9c9;border-radius:5px 5px 0 0;"></div>
<span class="t" style="left:988.78px;top:562.00px;font:normal 12.5px/16px 'Liberation Sans',sans-serif;color:#141414;transform:scaleX(0.9766);">Receptura</span>
<div style="left:1054px;top:553px;width:112px;height:30px;background:#f3f3f3;border:1px solid #c9c9c9;border-radius:5px 5px 0 0;"></div>
<span class="t" style="left:1059.50px;top:562.00px;font:normal 12.5px/16px 'Liberation Sans',sans-serif;color:#141414;transform:scaleX(1.0061);">Artikal u recepturi</span>
<div style="left:233px;top:582px;width:1189px;height:1px;background:#d6d6d6;"></div>
<div style="left:233px;top:583px;width:1189px;height:227px;background:#fbfbfb;"></div>
<div style="left:234px;top:583px;width:177px;height:16px;background:#ebebeb;border-right:1px solid #9a9a9a;border-left:1px solid #d0d0d0;"></div>
<span class="t" style="left:236.63px;top:585.00px;font:normal 12px/16px 'Liberation Sans',sans-serif;color:#141414;transform:scaleX(0.9897);">Barkod</span>
<div style="left:234px;top:599px;width:177px;height:42px;background:#fdfdfd;border:1px solid #b0b0b0;border-top:none;"></div>
<div style="left:235px;top:620px;width:175px;height:1px;background:#c8c8c8;"></div>
<div style="left:231px;top:599px;width:183px;height:24.6px;border:3px solid #ed1c24;background:#f3f3f3;"></div>
<div style="left:234.5px;top:602.5px;width:176.5px;height:18px;border:1px dotted #111;"></div>
<span class="t" style="left:236.76px;top:604.00px;font:normal 11.5px/16px 'Liberation Sans',sans-serif;color:#141414;transform:scaleX(0.9478);">0001842802265</span>
<span class="t" style="left:236.66px;top:623.00px;font:normal 11.5px/16px 'Liberation Sans',sans-serif;color:#141414;transform:scaleX(0.9496);">8000700000123</span>
<div style="left:233px;top:789px;width:158px;height:19px;background:#fbfbfb;"></div>
<div style="left:391px;top:789px;width:770px;height:19px;background:#f3f3f3;"></div>
<div style="left:232px;top:808px;width:1190px;height:34px;background:#f3f3f3;"></div>
<div style="left:234px;top:808px;width:1188px;height:1px;background:#cacaca;"></div>
<div style="left:234px;top:583px;width:1px;height:16px;background:#cfcfcf;"></div>
<div style="left:234px;top:624px;width:1px;height:184px;background:#cfcfcf;"></div>
<span class="t" style="left:241.58px;top:791.00px;font:normal 13px/16px 'Liberation Sans',sans-serif;color:#141414;transform:scaleX(1.0111);">1 od 2</span>
<div style="left:236px;top:816px;width:16.5px;height:16.5px;background:#2b579a;border-radius:3.500px;"></div>
<svg style="left:236px;top:816px" width="17" height="17" viewBox="0 0 17 17"><path d="M4 8.500l3 3 6-6.500" stroke="#fff" stroke-width="1.300" fill="none"/></svg>
<span class="t" style="left:256.69px;top:817.00px;font:normal 13px/16px 'Liberation Sans',sans-serif;color:#141414;transform:scaleX(0.8978);">F2 - IZMENE</span>
<div class="vs" style="left:330px;top:812px;width:1px;height:25px;"></div>
<div class="vs" style="left:362px;top:812px;width:1px;height:25px;"></div>
<div class="vs" style="left:394px;top:812px;width:1px;height:25px;"></div>
<div class="vs" style="left:426px;top:812px;width:1px;height:25px;"></div>
<div class="vs" style="left:548px;top:812px;width:1px;height:25px;"></div>
<div class="vs" style="left:583px;top:812px;width:1px;height:25px;"></div>
<div class="cb" style="left:431px;top:813px;width:115px;height:23px;"></div>
<span class="t" style="left:435.74px;top:817.00px;font:normal 13px/16px 'Liberation Sans',sans-serif;color:#141414;transform:scaleX(0.9282);">Alt+S Svi artikli</span>
<svg style="left:530px;top:821px" width="10" height="7" viewBox="0 0 10 7"><path d="M1 1l4 4.200 4-4.200" stroke="#222" stroke-width="1.100" fill="none"/></svg>
<div class="cb" style="left:553px;top:813px;width:28px;height:23px;"></div>
<div class="vs" style="left:895px;top:812px;width:1px;height:25px;"></div>
<div class="vs" style="left:997px;top:812px;width:1px;height:25px;"></div>
<div class="vs" style="left:1099px;top:812px;width:1px;height:25px;"></div>
<div class="vs" style="left:1201.5px;top:812px;width:1px;height:25px;"></div>
<div class="vs" style="left:1323.5px;top:812px;width:1px;height:25px;"></div>
<div class="vs" style="left:1419.5px;top:812px;width:1px;height:25px;"></div>
<span class="t" style="left:901.26px;top:817.00px;font:normal 11px/16px 'Liberation Sans',sans-serif;color:#141414;transform:scaleX(0.9664);">NBC:</span>
<span class="t" style="left:960.38px;top:817.00px;font:normal 13px/16px 'Liberation Sans',sans-serif;color:#141414;transform:scaleX(1.0033);">67,76</span>
<span class="t" style="left:1003.62px;top:817.00px;font:normal 11px/16px 'Liberation Sans',sans-serif;color:#141414;transform:scaleX(0.9001);">VPC:</span>
<span class="t" style="left:1062.35px;top:817.00px;font:normal 13px/16px 'Liberation Sans',sans-serif;color:#141414;transform:scaleX(1.0067);">99,99</span>
<span class="t" style="left:1104.76px;top:817.00px;font:normal 11px/16px 'Liberation Sans',sans-serif;color:#141414;transform:scaleX(0.9368);">MPC:</span>
<span class="t" style="left:1159.77px;top:817.00px;font:normal 13px/16px 'Liberation Sans',sans-serif;color:#141414;transform:scaleX(1.0368);">119,99</span>
<span class="t" style="left:1207.71px;top:817.00px;font:normal 11px/16px 'Liberation Sans',sans-serif;color:#141414;transform:scaleX(0.9183);">CENA:</span>
<span class="t" style="left:1279.05px;top:817.00px;font:normal 13px/16px 'Liberation Sans',sans-serif;color:#141414;transform:scaleX(1.0279);">119,99</span>
<div style="left:1327.5px;top:812.5px;width:32px;height:24px;background:#fdfdfd;border:1px solid #e6e6e6;border-bottom-color:#cacaca;border-radius:4.500px;"></div>
<span class="t" style="left:1334.56px;top:817.00px;font:normal 13px/16px 'Liberation Sans',sans-serif;color:#141414;transform:scaleX(0.9288);">LB</span>
<div style="left:1365px;top:812.5px;width:52.5px;height:24px;background:#fdfdfd;border:1px solid #e6e6e6;border-bottom-color:#cacaca;border-radius:4.500px;"></div>
<span class="t" style="left:1370.43px;top:817.00px;font:normal 13px/16px 'Liberation Sans',sans-serif;color:#141414;transform:scaleX(0.9788);">Kartica</span>
<div style="left:1160px;top:549px;width:261px;height:261px;background:#f3f3f3;border:3px solid #ed1c24;"></div>
<div style="left:1163px;top:553px;width:139.5px;height:30px;background:#f4f4f4;border:1px solid #cfcfcf;border-bottom:none;border-radius:5px 5px 0 0;"></div>
<div style="left:1168.5px;top:554px;width:129.5px;height:3px;background:#2b579a;"></div>
<span class="t" style="left:1170.72px;top:562.00px;font:normal 12.5px/16px 'Liberation Sans',sans-serif;color:#141414;transform:scaleX(0.9438);">Specifikacija barkodova</span>
<div style="left:1302px;top:553px;width:70px;height:30px;background:#f3f3f3;border:1px solid #cfcfcf;border-radius:5px 5px 0 0;"></div>
<div style="left:1307.3px;top:562.00px;width:50px;height:16px;overflow:hidden;"><span class="t" style="left:1.20px;top:0;font:normal 12.5px/16px 'Liberation Sans',sans-serif;color:#141414;transform:scaleX(0.9600);">Serijski brojevi</span></div>
<div style="left:1357px;top:552px;width:61px;height:23px;background:#f5f5f5;"></div>
<div style="left:1357px;top:575px;width:61px;height:7px;background:#fafafa;"></div>
<div style="left:1302.5px;top:582px;width:115.5px;height:1px;background:#cccccc;"></div>
<svg style="left:1362px;top:559px" width="11" height="11" viewBox="0 0 11 11"><path d="M1.800 1.500l7.400 7.600M9.200 1.500l-7.400 7.600" stroke="#000" stroke-width="2" fill="none"/></svg>
<svg style="left:1384px;top:559px" width="6" height="11" viewBox="0 0 6 11"><path d="M5 1L1 5.500 5 10" stroke="#c4c4c4" stroke-width="1.100" fill="none"/></svg>
<svg style="left:1406px;top:559px" width="6" height="11" viewBox="0 0 6 11"><path d="M1 1l4 4.500L1 10" stroke="#333" stroke-width="1.100" fill="none"/></svg>
<div style="left:1165px;top:583.5px;width:253px;height:224px;background:#f3f3f3;border:1px solid #d2d2d2;border-bottom:none;border-radius:5px 5px 0 0;"></div>
<div style="left:1166px;top:584.5px;width:251px;height:20px;background:#fbfbfb;border-radius:4px 4px 0 0;"></div>
<div style="left:1166px;top:604px;width:251px;height:1px;background:#d2d2d2;"></div>
<span class="t" style="left:1176.59px;top:587.00px;font:normal 12.5px/16px 'Liberation Sans',sans-serif;color:#141414;transform:scaleX(0.9740);">Definisanje akcije pred istek roka trajanja</span>
<span class="t" style="left:1195.78px;top:619.00px;font:normal 12.5px/16px 'Liberation Sans',sans-serif;color:#141414;transform:scaleX(0.9744);">Datum sniženja:</span>
<div style="left:1288px;top:615.4px;width:100px;height:21px;background:#fcfcfc;border:1px solid #e4e4e4;border-bottom-color:#b4b4b4;border-radius:4.500px;"></div>
<span class="t" style="left:1291.11px;top:619.00px;font:normal 13px/16px 'Liberation Sans',sans-serif;color:#141414;transform:scaleX(0.9989);">10.02.26</span>
<svg style="left:1372px;top:623.0px" width="10" height="7" viewBox="0 0 10 7"><path d="M1 1l4 4.200 4-4.200" stroke="#222" stroke-width="1.100" fill="none"/></svg>
<span class="t" style="left:1171.40px;top:647.00px;font:normal 12.5px/16px 'Liberation Sans',sans-serif;color:#141414;transform:scaleX(1.0019);">Krajnji rok upotrebe:</span>
<div style="left:1288px;top:643.4px;width:100px;height:21px;background:#fcfcfc;border:1px solid #e4e4e4;border-bottom-color:#b4b4b4;border-radius:4.500px;"></div>
<span class="t" style="left:1291.70px;top:647.00px;font:normal 13px/16px 'Liberation Sans',sans-serif;color:#141414;transform:scaleX(0.9848);">28.02.26</span>
<svg style="left:1372px;top:651.0px" width="10" height="7" viewBox="0 0 10 7"><path d="M1 1l4 4.200 4-4.200" stroke="#222" stroke-width="1.100" fill="none"/></svg>
<span class="t" style="left:1240.60px;top:675.00px;font:normal 12.5px/16px 'Liberation Sans',sans-serif;color:#141414;transform:scaleX(0.9091);">Količina:</span>
<div style="left:1288px;top:671.5px;width:100px;height:21px;background:#fcfcfc;border:1px solid #e4e4e4;border-bottom-color:#b4b4b4;border-radius:4.500px;"></div>
<span class="t" style="left:1352.20px;top:675.00px;font:normal 13px/16px 'Liberation Sans',sans-serif;color:#141414;transform:scaleX(0.9828);">20,00</span>
<span class="t" style="left:1183.59px;top:703.00px;font:normal 12.5px/16px 'Liberation Sans',sans-serif;color:#141414;transform:scaleX(0.9738);">Procenat sniženja:</span>
<div style="left:1288px;top:699.6px;width:100px;height:21px;background:#fcfcfc;border:1px solid #e4e4e4;border-bottom-color:#b4b4b4;border-radius:4.500px;"></div>
<span class="t" style="left:1351.61px;top:703.00px;font:normal 13px/16px 'Liberation Sans',sans-serif;color:#141414;transform:scaleX(1.0019);">10,00</span>
<span class="t" style="left:1251.96px;top:731.00px;font:normal 12.5px/16px 'Liberation Sans',sans-serif;color:#141414;transform:scaleX(0.9566);">Cena:</span>
<div style="left:1288px;top:727.7px;width:100px;height:21px;background:#fcfcfc;border:1px solid #e4e4e4;border-bottom-color:#b4b4b4;border-radius:4.500px;"></div>
<span class="t" style="left:1344.11px;top:731.00px;font:normal 13px/16px 'Liberation Sans',sans-serif;color:#141414;transform:scaleX(0.9963);">107,99</span>
<div style="left:1169px;top:779px;width:95px;height:24.5px;background:#fdfdfd;border:1px solid #e6e6e6;border-bottom-color:#cacaca;border-radius:4.500px;"></div>
<span class="t" style="left:1173.90px;top:784.00px;font:normal 12.5px/16px 'Liberation Sans',sans-serif;color:#141414;transform:scaleX(0.9409);">Generiši barkod</span>
<div style="left:1325px;top:779px;width:90px;height:24.5px;background:#fdfdfd;border:1px solid #e6e6e6;border-bottom-color:#cacaca;border-radius:4.500px;"></div>
<span class="t" style="left:1330.47px;top:784.00px;font:normal 12.5px/16px 'Liberation Sans',sans-serif;color:#141414;transform:scaleX(0.9927);">Štampaj cene</span>
<span class="t" style="left:1193.60px;top:849.00px;font:normal 12.5px/16px 'Liberation Sans',sans-serif;color:#fff;transform:scaleX(0.9424);">T R X</span>
<div style="left:1240px;top:843px;width:1px;height:26px;background:rgba(0,0,0,0.10);"></div>
<div style="left:1243px;top:843px;width:1px;height:26px;background:rgba(255,255,255,0.07);"></div>
<div style="left:1268px;top:843px;width:1px;height:26px;background:rgba(0,0,0,0.10);"></div>
<div style="left:1271px;top:843px;width:1px;height:26px;background:rgba(255,255,255,0.07);"></div>
<div style="left:1305px;top:843px;width:1px;height:26px;background:rgba(0,0,0,0.10);"></div>
<div style="left:1308px;top:843px;width:1px;height:26px;background:rgba(255,255,255,0.07);"></div>
<div style="left:1338.5px;top:843px;width:1px;height:26px;background:rgba(0,0,0,0.10);"></div>
<div style="left:1341.5px;top:843px;width:1px;height:26px;background:rgba(255,255,255,0.07);"></div>
<div style="left:1373.5px;top:843px;width:1px;height:26px;background:rgba(0,0,0,0.10);"></div>
<div style="left:1376.5px;top:843px;width:1px;height:26px;background:rgba(255,255,255,0.07);"></div>
<span class="t" style="left:1274.02px;top:849.00px;font:normal 12.5px/16px 'Liberation Sans',sans-serif;color:#9aa0a0;transform:scaleX(0.8559);">CAPS</span>
<span class="t" style="left:1310.17px;top:849.00px;font:normal 12.5px/16px 'Liberation Sans',sans-serif;color:#9aa0a0;transform:scaleX(0.9128);">NUM</span>
<span class="t" style="left:1343.28px;top:849.00px;font:normal 12.5px/16px 'Liberation Sans',sans-serif;color:#9aa0a0;transform:scaleX(0.8094);">SCRL</span>
<span class="t" style="left:1381.13px;top:849.00px;font:normal 12.5px/16px 'Liberation Sans',sans-serif;color:#9aa0a0;transform:scaleX(0.9171);">INS</span>
<svg style="left:218px;top:42px" width="16" height="14" viewBox="0 0 16 14"><g fill="#4a5157"><path d="M3.400 1h2.900l.7 2.200v6.300H.9L1.900 4z"/><path d="M9.700 1h2.900L14.100 4l1 5.500H9V3.200z"/><rect x="6.500" y="4.200" width="3" height="3"/><circle cx="4" cy="9.700" r="3.300"/><circle cx="12" cy="9.700" r="3.300"/></g><circle cx="4" cy="9.700" r="2" fill="#f3f3f3"/><circle cx="12" cy="9.700" r="2" fill="#f3f3f3"/></svg>
<svg style="left:304px;top:41px" width="16" height="17" viewBox="0 0 16 17"><g fill="#4a5157"><ellipse cx="6.800" cy="4.900" rx="2.900" ry="3.800"/><path d="M1 13.850V12.200C1 10.600 2.800 9.800 4.700 9.600L6.900 10.900V13.850z"/></g><circle cx="11.600" cy="12.400" r="3.700" fill="#0f72dc"/><rect x="11.050" y="11.700" width="1.100" height="2.900" fill="#fff"/><rect x="11.050" y="9.900" width="1.100" height="1.100" fill="#fff"/></svg>
<svg style="left:393px;top:41px" width="16" height="16" viewBox="0 0 16 16"><path d="M10.400 11.550h2.800a1.200 1.200 0 0 0 1.200-1.200V2.750a1.200 1.200 0 0 0-1.200-1.200H2.800a1.200 1.200 0 0 0-1.200 1.200v7.600a1.200 1.200 0 0 0 1.200 1.200h4.600M10.400 11.550L8.400 14.600" fill="none" stroke="#3f7ac4" stroke-width="1.150" stroke-linecap="round"/><rect x="4.950" y="4.050" width="2.050" height="1.800" fill="#3f7ac4"/><rect x="9.100" y="4.050" width="2" height="1.800" fill="#3f7ac4"/><path d="M5 7.400Q8 10.200 11 7.400" fill="none" stroke="#3f7ac4" stroke-width="1.200"/></svg>
<svg style="left:890.5px;top:42.5px" width="16" height="12" viewBox="0 0 16 12"><rect x=".95" y=".95" width="14.100" height="10.100" fill="#fff" stroke="#3c4650" stroke-width="1.100"/><circle cx="4.700" cy="4.300" r="1.600" fill="#0f72dc"/><path d="M2.300 9.300c0-2 1-2.700 2.400-2.700s2.400.7 2.400 2.700z" fill="#0f72dc"/><path d="M8.500 4h5M8.500 6h5M8.500 8h5" stroke="#7a828a" stroke-width="1"/></svg>
<svg style="left:1009px;top:42px" width="14" height="14" viewBox="0 0 14 14"><g transform="translate(7,7.100)"><circle r="2.700" fill="#b4b4b4"/><g stroke="#c4c4c4" stroke-width="1.200"><path d="M0 -3.900V-6" transform="rotate(0)"/><path d="M0 -3.900V-6" transform="rotate(45)"/><path d="M0 -3.900V-6" transform="rotate(90)"/><path d="M0 -3.900V-6" transform="rotate(135)"/><path d="M0 -3.900V-6" transform="rotate(180)"/><path d="M0 -3.900V-6" transform="rotate(225)"/><path d="M0 -3.900V-6" transform="rotate(270)"/><path d="M0 -3.900V-6" transform="rotate(315)"/></g></g></svg>
<svg style="left:1034px;top:43.5px" width="13" height="12" viewBox="0 0 13 12"><mask id="mm"><rect width="13" height="12" fill="#fff"/><circle cx="9.300" cy="3.700" r="4.300" fill="#000"/></mask><circle cx="6.300" cy="6" r="5" fill="#f5a21b" mask="url(#mm)"/></svg>
<svg style="left:1152px;top:41.1px" width="22.2" height="16.5" viewBox="0 0 22.2 16.5"><rect width="22" height="5.500" fill="#e4003a"/><rect y="5.500" width="22" height="5.800" fill="#0c2a6e"/><rect y="11.300" width="22" height="5" fill="#ffffff"/><path d="M5.600 3.400h4.800v7.400c0 1.600-1.200 2.500-2.400 3-1.200-.5-2.400-1.400-2.400-3z" fill="#c9666f"/><path d="M6.800 5h2.400v5.600c0 .8-.6 1.300-1.200 1.600-.6-.3-1.200-.8-1.200-1.600z" fill="#e9d6da"/><rect x="7" y="2.300" width="2" height="1.200" fill="#c9954a"/></svg>
<svg style="left:1226.5px;top:43.7px" width="16" height="12" viewBox="0 0 16 12"><rect x=".9" y=".9" width="14.200" height="10" fill="#eef1f9" stroke="#6a86c6" stroke-width="1.100"/><path d="M1 1.200l7 5.600 7-5.600M1 10.800l5.300-5M15 10.800l-5.300-5" fill="none" stroke="#6a86c6" stroke-width="1"/></svg>
<svg style="left:245px;top:70px" width="19" height="18" viewBox="0 0 19 18"><path d="M13.300 6.600V2.150a.5.500 0 0 0-.5-.5H2.150a.5.500 0 0 0-.5.500v10.750a.5.500 0 0 0 .5.500H6.700" fill="none" stroke="#4a5157" stroke-width="1.150" stroke-linecap="round"/><path d="M4.200 4.400h6.400M4.200 6.500h6.400M4.200 8.500h4.400M4.200 10.500h2.400" stroke="#4a5157" stroke-width="1" stroke-linecap="round"/><g fill="#0f6fd6"><path d="M11 11V8.600h3.500V11" fill="none" stroke="#0f6fd6" stroke-width="1.100"/><path d="M8 10.400c0-.3.200-.5.450-.5s.45.200.45.500v1.500h7.100v-1.500c0-.3.200-.5.450-.5s.45.200.45.500v5.100c0 .3-.2.500-.5.500H8.500c-.3 0-.5-.2-.5-.5z"/><rect x="10" y="14" width="5" height="3" rx=".5"/></g><rect x="11.050" y="14.100" width="2.850" height="1.700" fill="#fff"/></svg>
<svg style="left:338px;top:72px" width="16" height="13" viewBox="0 0 16 13"><path d="M1.600 7.200l4 4L14.400 1.800" fill="none" stroke="#dcdcdc" stroke-width="1.700"/></svg>
<svg style="left:441px;top:70px" width="17" height="18" viewBox="0 0 17 18"><rect x="7.7" y="1.7" width="8.600" height="9.500" fill="#fff" stroke="#c2c2c2" stroke-width="1.100"/><rect x="5.7" y="3.7" width="8.600" height="9.500" fill="#fff" stroke="#c2c2c2" stroke-width="1.100"/><rect x="3.7" y="5.7" width="8.600" height="9.500" fill="#fff" stroke="#c2c2c2" stroke-width="1.100"/><rect x="1.7000000000000002" y="7.7" width="8.600" height="9.500" fill="#fff" stroke="#c2c2c2" stroke-width="1.100"/></svg>
<svg style="left:604px;top:71px" width="16" height="16" viewBox="0 0 16 16"><rect x="1.600" y="1.600" width="12.800" height="12.800" fill="none" stroke="#dedede" stroke-width="1.100"/><rect x="8" y="2.200" width="6" height="1.800" fill="#e2e2e2"/><path d="M5.400 5.400l5.200 5.200M10.600 5.400l-5.200 5.200" stroke="#b4b4b4" stroke-width="1.300"/><path d="M2.200 7.400h2M11 7.400h3M11 8.800h3" stroke="#e0e0e0" stroke-width="1"/></svg>
<svg style="left:736px;top:71px" width="16" height="16" viewBox="0 0 16 16"><path d="M1.600 .7v14.200h13.400" fill="none" stroke="#c8c8c8" stroke-width="1.200"/><path d="M5.500 3.500c3.500 0 6.500 2.500 6.500 7" fill="none" stroke="#c4c4c4" stroke-width="1.800"/><path d="M3.500 3.600l3.600-3v5.800z" fill="#c4c4c4"/><path d="M9 9.300h6.200l-3.100 3.900z" fill="#c4c4c4"/></svg>
<svg style="left:810px;top:71px" width="18" height="15" viewBox="0 0 18 15"><path d="M1.600 8.600l3.600-4h9.200v8H5.200z" fill="none" stroke="#c2c2c2" stroke-width="1.200" stroke-linejoin="round"/><circle cx="5.600" cy="8.600" r=".9" fill="#c2c2c2"/><path d="M8 7.500h4.200M8 9.700h4.200" stroke="#c2c2c2" stroke-width="1.100"/><circle cx="14.800" cy="4.200" r="2" fill="#c6c6c6"/><path d="M14.800 1.200v6M11.800 4.200h6M12.700 2.100l4.200 4.200M16.900 2.100l-4.200 4.200" stroke="#d0d0d0" stroke-width=".7"/></svg>
<svg style="left:887px;top:70px" width="17" height="17" viewBox="0 0 17 17"><path d="M3.430 4.580A6.100 6.100 0 1 1 2.100 9.560" fill="none" stroke="#0f6fd6" stroke-width="1.900"/><path d="M1 2.400v4.900h4.800z" fill="#0f6fd6"/><path d="M7.600 5.400v3.600h3.300" fill="none" stroke="#2a3540" stroke-width="1.300"/></svg>
<svg style="left:957px;top:71.5px" width="16" height="16" viewBox="0 0 16 16"><path d="M1.600 1.500h7l3.500 3.200v9.400H1.600z" fill="#fdfdfd" stroke="#cacaca" stroke-width="1.100"/><path d="M8.600 1.500v3.200h3.500" fill="none" stroke="#cacaca" stroke-width="1"/><path d="M3.600 4.200h3.500M3.600 6.400h6.400M3.600 8.600h6.400M3.600 10.800h4" stroke="#d6d6d6" stroke-width="1"/><circle cx="11.700" cy="12.200" r="3.400" fill="#c4c4c4"/><path d="M10.300 10.800l2.800 2.800M13.100 10.800l-2.800 2.800" stroke="#fff" stroke-width="1"/></svg>
<svg style="left:1061px;top:71px" width="14" height="16" viewBox="0 0 14 16"><g fill="#2b579a"><ellipse cx="6.900" cy="4.700" rx="3.300" ry="4"/><path d="M.8 14.800v-2.400c0-1.600 1.800-2.600 4-2.900l2.100 1.600 2.100-1.600c2.200.3 4 1.300 4 2.900v2.400z"/></g></svg>
<svg style="left:1135px;top:71px" width="16" height="16" viewBox="0 0 16 16"><g fill="#2b579a"><rect x="1" y="1.100" width="14" height="2.700"/><rect x="1.300" y="5.300" width="13.400" height="9.500"/></g><rect x="6.200" y="7.100" width="3.600" height="1.700" fill="#fff"/></svg>
<svg style="left:434px;top:535px" width="11" height="11" viewBox="0 0 11 11"><path d="M5.500 1.300v8.600M1.200 5.600h8.600" stroke="#17876f" stroke-width="2"/></svg>
<svg style="left:458px;top:535px" width="11" height="11" viewBox="0 0 11 11"><path d="M1.500 5.600h8" stroke="#e8365f" stroke-width="2"/></svg>
<svg style="left:482px;top:534px" width="13" height="13" viewBox="0 0 13 13"><path d="M2 11.500l.6-3L8.800 2.200a1.300 1.300 0 0 1 1.800 0l.7.700a1.300 1.300 0 0 1 0 1.800L5 11z" fill="none" stroke="#111" stroke-width="1.100" stroke-linejoin="round"/><path d="M7.600 3.500l2.400 2.400" stroke="#111" stroke-width="1"/></svg>
<svg style="left:506px;top:535px" width="13" height="11" viewBox="0 0 13 11"><path d="M1 6.500l3.200 3L11.200 2" fill="none" stroke="#7a7a7a" stroke-width="1"/></svg>
<svg style="left:531px;top:536px" width="10" height="10" viewBox="0 0 10 10"><path d="M1 1.200l8 8M9 1.200l-8 8" stroke="#555" stroke-width="1"/></svg>
<svg style="left:554px;top:535px" width="12" height="11" viewBox="0 0 12 11"><path d="M7.300 1.100l3.800 3.400-3.800 3.600M11.100 4.500H3.400C1.200 4.500.6 7 1.700 8c.6.600 1.400.700 2.200.700" fill="none" stroke="#222" stroke-width="1.200"/></svg>
<svg style="left:578px;top:535.5px" width="11" height="11" viewBox="0 0 11 11"><g transform="translate(5.600,5)"><g stroke="#111" stroke-width="1.300"><path d="M0 -4.500V4.500" transform="rotate(0)"/><path d="M0 -4.500V4.500" transform="rotate(90)"/></g><g stroke="#222" stroke-width="1.150"><path d="M0 -4.300V4.300" transform="rotate(45)"/><path d="M0 -4.300V4.300" transform="rotate(135)"/></g></g></svg>
<svg style="left:600px;top:533px" width="14" height="14" viewBox="0 0 14 14"><g transform="translate(7.400,7.500)"><g stroke="#6a6a6a" stroke-width="1.200"><path d="M0 -4.500V4.500" transform="rotate(0)"/><path d="M0 -4.500V4.500" transform="rotate(90)"/></g><g stroke="#777" stroke-width="1.100"><path d="M0 -4.300V4.300" transform="rotate(45)"/><path d="M0 -4.300V4.300" transform="rotate(135)"/></g></g><path d="M1.200 1v4.800l2.800-2z" fill="none" stroke="#777" stroke-width=".9"/><path d="M3.500 3.300l3 3" stroke="#888" stroke-width=".8" stroke-dasharray="1 .8"/></svg>
<svg style="left:625.5px;top:535.5px" width="14" height="12" viewBox="0 0 14 12"><path d="M1 .8h12L8.200 6.300v4.800H5.800V6.300z" fill="none" stroke="#444" stroke-width="1.100" stroke-linejoin="round"/></svg>
<svg style="left:291px;top:792px" width="11" height="11" viewBox="0 0 11 11"><path d="M5.500 1.300v8.600M1.200 5.600h8.600" stroke="#17876f" stroke-width="2"/></svg>
<svg style="left:315px;top:792px" width="11" height="11" viewBox="0 0 11 11"><path d="M1.500 5.600h8" stroke="#e8365f" stroke-width="2"/></svg>
<svg style="left:340px;top:793px" width="10" height="10" viewBox="0 0 10 10"><path d="M1 1.200l8 8M9 1.200l-8 8" stroke="#555" stroke-width="1"/></svg>
<svg style="left:363px;top:792px" width="12" height="11" viewBox="0 0 12 11"><path d="M7.300 1.100l3.800 3.400-3.800 3.600M11.100 4.500H3.400C1.200 4.500.6 7 1.700 8c.6.600 1.400.700 2.200.700" fill="none" stroke="#222" stroke-width="1.200"/></svg>
<svg style="left:339px;top:817px" width="17" height="14" viewBox="0 0 17 14"><rect x=".5" y="0.9" width="15.800" height="1.300" fill="#666"/><rect x=".5" y="3.55" width="15.800" height="1.300" fill="#999"/><rect x=".5" y="6.2" width="15.800" height="1.300" fill="#666"/><rect x=".5" y="8.85" width="15.800" height="1.300" fill="#999"/><rect x=".5" y="11.5" width="15.800" height="1.300" fill="#666"/></svg>
<svg style="left:370px;top:815px" width="19" height="19" viewBox="0 0 19 19"><path d="M1.500 2.500c0-1 2.500-1.700 5.500-1.700s5.500.7 5.500 1.700L8.200 8v5.200H5.800V8z" fill="#fafcff" stroke="#8391a8" stroke-width="1"/><ellipse cx="7" cy="2.600" rx="4" ry="1" fill="#5a6780"/><circle cx="12.300" cy="11.900" r="4.800" fill="#d9482e"/><path d="M9.300 14.200l5.600-5" stroke="#fff" stroke-width="2"/></svg>
<svg style="left:402px;top:815px" width="19" height="19" viewBox="0 0 19 19"><rect x="1" y="3.200" width="6.800" height="2.500" fill="#d4161c"/><rect x="9" y="1.1" width="9" height="2.900" fill="#b2b2b2"/><rect x="9" y="5.699999999999999" width="9" height="2.900" fill="#b2b2b2"/><rect x="9" y="10.299999999999999" width="9" height="2.900" fill="#b2b2b2"/><rect x="9" y="14.899999999999999" width="9" height="2.900" fill="#b2b2b2"/><rect x="9" y="4.0" width="9" height="1.700" fill="#dcdcdc"/><rect x="9" y="8.6" width="9" height="1.700" fill="#dcdcdc"/><rect x="9" y="13.2" width="9" height="1.700" fill="#dcdcdc"/></svg>
<svg style="left:556px;top:815px" width="20" height="17" viewBox="0 0 20 17"><rect x="1.1" y="1.4" width="4.900" height="3.600" rx=".4" fill="#b2b2b2"/><rect x="7.5" y="1.4" width="4.900" height="3.600" rx=".4" fill="#ffaa00"/><rect x="13.9" y="1.4" width="4.900" height="3.600" rx=".4" fill="#b2b2b2"/><rect x="1.1" y="6.4" width="4.900" height="3.600" rx=".4" fill="#d40000"/><rect x="7.5" y="6.4" width="4.900" height="3.600" rx=".4" fill="#b2b2b2"/><rect x="13.9" y="6.4" width="4.900" height="3.600" rx=".4" fill="#b2b2b2"/><rect x="1.1" y="11.6" width="4.900" height="3.600" rx=".4" fill="#b2b2b2"/><rect x="7.5" y="11.6" width="4.900" height="3.600" rx=".4" fill="#b2b2b2"/><rect x="13.9" y="11.6" width="4.900" height="3.600" rx=".4" fill="#009a00"/></svg>
<svg style="left:1246px;top:846px" width="20" height="20" viewBox="0 0 20 20"><path d="M12.600 14.450h3.650a2 2 0 0 0 2-2V3.650a2 2 0 0 0-2-2H3.750a2 2 0 0 0-2 2v8.800a2 2 0 0 0 2 2h5.300M12.600 14.450L10.300 18.600" fill="none" stroke="#eef2f8" stroke-width="1.400" stroke-linecap="round"/><circle cx="7.500" cy="6.200" r="1.150" fill="#fff"/><circle cx="12.500" cy="6.200" r="1.150" fill="#fff"/><path d="M6.800 9.400Q10 12.600 13.200 9.400" fill="none" stroke="#eef2f8" stroke-width="1.300" stroke-linecap="round"/></svg>
<div style="left:1418px;top:858px;width:2px;height:2px;background:#dfe6f2;"></div>
<div style="left:1414px;top:862px;width:2px;height:2px;background:#dfe6f2;"></div>
<div style="left:1418px;top:862px;width:2px;height:2px;background:#dfe6f2;"></div>
<div style="left:1410px;top:866px;width:2px;height:2px;background:#dfe6f2;"></div>
<div style="left:1414px;top:866px;width:2px;height:2px;background:#dfe6f2;"></div>
<div style="left:1418px;top:866px;width:2px;height:2px;background:#dfe6f2;"></div>
<svg style="left:198px;top:815px" width="20" height="20" viewBox="0 0 20 20"><path d="M8.49 1.23 L11.51 1.23 L11.54 3.48 L13.45 4.27 L15.06 2.70 L17.20 4.84 L15.63 6.45 L16.42 8.36 L18.67 8.39 L18.67 11.41 L16.42 11.44 L15.63 13.35 L17.20 14.96 L15.06 17.10 L13.45 15.53 L11.54 16.32 L11.51 18.57 L8.49 18.57 L8.46 16.32 L6.55 15.53 L4.94 17.10 L2.80 14.96 L4.37 13.35 L3.58 11.44 L1.33 11.41 L1.33 8.39 L3.58 8.36 L4.37 6.45 L2.80 4.84 L4.94 2.70 L6.55 4.27 L8.46 3.48z" fill="none" stroke="#1a1a1a" stroke-width="1.200" stroke-linejoin="round"/><circle cx="10" cy="9.900" r="2.800" fill="none" stroke="#1a1a1a" stroke-width="1.200"/></svg>
<svg style="left:0;top:0" width="0" height="0"><defs><linearGradient id="gb" x1="0" y1="0" x2="0" y2="1"><stop offset="0" stop-color="#a9cdf2"/><stop offset="1" stop-color="#6fa3e0"/></linearGradient><linearGradient id="gb2" x1="0" y1="0" x2="1" y2="1"><stop offset="0" stop-color="#b8d8f6"/><stop offset="1" stop-color="#5f97dc"/></linearGradient></defs></svg>
<svg style="left:14px;top:499px" width="18" height="17" viewBox="0 0 18 17"><path d="M9.10 1.40 L11.39 6.14 L16.61 6.86 L12.81 10.51 L13.74 15.69 L9.10 13.20 L4.46 15.69 L5.39 10.51 L1.59 6.86 L6.81 6.14z" fill="url(#gb)" stroke="#5b8fd2" stroke-width="1" stroke-linejoin="round"/></svg>
<svg style="left:16px;top:524px" width="14" height="16" viewBox="0 0 14 16"><rect x="1.500" y="1.500" width="11.200" height="13" rx=".8" fill="url(#gb2)" stroke="#4a7ac4" stroke-width="1"/><rect x="1.200" y="1.200" width="2.200" height="13.600" fill="#2b3f78"/><path d="M3.400 2.500h9" stroke="#dceafa" stroke-width="1"/></svg>
<svg style="left:14px;top:550px" width="18" height="14" viewBox="0 0 18 14"><rect x="1.5" y="1.7" width="6.600" height="4.300" fill="#bdd7f4" stroke="#5f90d4" stroke-width="1"/><rect x="9.7" y="1.7" width="6.600" height="4.300" fill="#bdd7f4" stroke="#5f90d4" stroke-width="1"/><rect x="1.5" y="7.7" width="6.600" height="4.300" fill="#bdd7f4" stroke="#5f90d4" stroke-width="1"/><rect x="9.7" y="7.7" width="6.600" height="4.300" fill="#bdd7f4" stroke="#5f90d4" stroke-width="1"/></svg>
<svg style="left:16px;top:572px" width="13" height="15" viewBox="0 0 13 15"><rect x="1.700" y="1.600" width="9.700" height="11.700" fill="#fff" stroke="#555" stroke-width="1.100"/><rect x="3.400" y="3.400" width="6.300" height="2.500" fill="#1668d8"/><path d="M3.400 7.600h6.300M3.400 9.500h6.300M3.400 11.400h6.300" stroke="#777" stroke-width="1"/></svg>
<svg style="left:15px;top:596px" width="16" height="16" viewBox="0 0 16 16"><rect x="1.500" y="1.500" width="13" height="13" fill="none" stroke="#1f2f4f" stroke-width="1.200" stroke-dasharray="3 1.600"/><rect x="3.800" y="3.800" width="8.600" height="8.600" fill="url(#gb2)" stroke="#c8dcf4" stroke-width=".6"/></svg>
<svg style="left:14px;top:619px" width="18" height="18" viewBox="0 0 18 18"><path d="M7.95 1.07 L10.05 1.07 L10.30 3.56 L11.86 4.20 L13.79 2.62 L15.28 4.11 L13.70 6.04 L14.34 7.60 L16.83 7.85 L16.83 9.95 L14.34 10.20 L13.70 11.76 L15.28 13.69 L13.79 15.18 L11.86 13.60 L10.30 14.24 L10.05 16.73 L7.95 16.73 L7.70 14.24 L6.14 13.60 L4.21 15.18 L2.72 13.69 L4.30 11.76 L3.66 10.20 L1.17 9.95 L1.17 7.85 L3.66 7.60 L4.30 6.04 L2.72 4.11 L4.21 2.62 L6.14 4.20 L7.70 3.56z" fill="#4a80c4"/><circle cx="9" cy="8.900" r="2.700" fill="#f3f3f3"/></svg>
<svg style="left:15px;top:644px" width="17" height="16" viewBox="0 0 17 16"><path d="M1.300 14.600V6.400c4.500 0 8.500 3.500 8.500 8.200z" fill="url(#gb2)" stroke="#3f78c8" stroke-width="1"/><path d="M4.300 3.600c3-2.700 8.500-2 9 3.600h2.200l-3.200 4.400-3.200-4.400h2.100c-.3-3-3.500-3.800-5.600-2.200z" fill="#b4d6f6" stroke="#3f78c8" stroke-width=".9" stroke-linejoin="round"/></svg>
<svg style="left:14.7px;top:668.3px" width="17" height="14" viewBox="0 0 17 14"><rect x="0.7" y=".7" width="6.300" height="12.600" fill="#e6f0fb" stroke="#5b8ed4" stroke-width="1"/><path d="M0.7 3.8499999999999996h6.300" stroke="#4a80c8" stroke-width=".9"/><path d="M0.7 7.0h6.300" stroke="#4a80c8" stroke-width=".9"/><path d="M0.7 10.149999999999999h6.300" stroke="#4a80c8" stroke-width=".9"/><path d="M2.9000000000000004 .7v12.600" stroke="#4a80c8" stroke-width=".8"/><rect x="9.8" y=".7" width="6.300" height="12.600" fill="#e6f0fb" stroke="#5b8ed4" stroke-width="1"/><path d="M9.8 3.8499999999999996h6.300" stroke="#4a80c8" stroke-width=".9"/><path d="M9.8 7.0h6.300" stroke="#4a80c8" stroke-width=".9"/><path d="M9.8 10.149999999999999h6.300" stroke="#4a80c8" stroke-width=".9"/><path d="M12.0 .7v12.600" stroke="#4a80c8" stroke-width=".8"/><circle cx="8.400" cy="7" r="3.700" fill="#f6faff" stroke="#4a80c8" stroke-width="1"/><path d="M7 6.300a1.800 1.800 0 0 1 2.600 .5l-.2 1.800" fill="none" stroke="#2a3a5a" stroke-width="1"/></svg>
<svg style="left:14px;top:690.5px" width="18" height="17" viewBox="0 0 18 17"><path d="M1.300 10l7.800-8.300 7.800 8.300" fill="none" stroke="#3f78b8" stroke-width="1.200"/><path d="M3.300 8.500v7.300h11.600V8.500" fill="none" stroke="#3f78b8" stroke-width="1.200"/><rect x="6" y="9.600" width="6.200" height="5" fill="#3f78b8"/><path d="M13.200 1.300v3.400" stroke="#3f78b8" stroke-width="1.300"/></svg>
<svg style="left:14px;top:716px" width="18" height="16" viewBox="0 0 18 16"><ellipse cx="5.7" cy="4.7" rx="2.1" ry="2.7" fill="#3f78b8"/><path d="M0.8 11.6c0-2.799999999999999 1.45-2.799999999999999 2.90-2.799999999999999s2.90 0 2.90 2.799999999999999z" fill="#3f78b8"/><ellipse cx="12.3" cy="4.7" rx="2.1" ry="2.7" fill="#3f78b8"/><path d="M11.4 11.6c0-2.799999999999999 1.45-2.799999999999999 2.90-2.799999999999999s2.90 0 2.90 2.799999999999999z" fill="#3f78b8"/><ellipse cx="9" cy="8" rx="2.900" ry="3.700" fill="#f3f3f3"/><ellipse cx="9" cy="8" rx="2.1" ry="2.9" fill="#3f78b8"/><path d="M3.8 15.2c0-3.1999999999999993 2.60-3.1999999999999993 5.20-3.1999999999999993s5.20 0 5.20 3.1999999999999993z" fill="#3f78b8"/></svg>
<svg style="left:14px;top:740px" width="18" height="17" viewBox="0 0 18 17"><ellipse cx="6.1" cy="6.7" rx="2.2" ry="3" fill="#3f78b8"/><path d="M1 13.8c0-3.0 1.70-3.0 3.40-3.0s3.40 0 3.40 3.0z" fill="#3f78b8"/><ellipse cx="10.400" cy="3.900" rx="1.700" ry="2.300" fill="#3f78b8"/><g transform="translate(12.600,11.400)"><circle r="2.200" fill="none" stroke="#3f78b8" stroke-width="1.300"/><g stroke="#3f78b8" stroke-width="1.200"><path d="M0 -2.300V-4.600" transform="rotate(0)"/><path d="M0 -2.300V-4.600" transform="rotate(45)"/><path d="M0 -2.300V-4.600" transform="rotate(90)"/><path d="M0 -2.300V-4.600" transform="rotate(135)"/><path d="M0 -2.300V-4.600" transform="rotate(180)"/><path d="M0 -2.300V-4.600" transform="rotate(225)"/><path d="M0 -2.300V-4.600" transform="rotate(270)"/><path d="M0 -2.300V-4.600" transform="rotate(315)"/></g></g></svg>
<svg style="left:15px;top:764.5px" width="16" height="15" viewBox="0 0 16 15"><path d="M5.300 3.600V2.300c0-.5.400-.9.900-.9h3.600c.5 0 .9.400.9.900v1.300" fill="none" stroke="#3f78b8" stroke-width="1.200"/><rect x="1" y="3.600" width="14" height="4.200" rx=".6" fill="#3f78b8"/><rect x="1" y="8.600" width="14" height="5.400" rx=".4" fill="#3f78b8"/><rect x="7" y="7" width="2" height="2.400" fill="#f3f3f3"/></svg>
<svg style="left:14px;top:786px" width="18" height="20" viewBox="0 0 18 20"><g transform="translate(6.4,6.4)"><circle r="2.100" fill="none" stroke="#3f78b8" stroke-width="1.100"/><g stroke="#3f78b8" stroke-width="1.100"><path d="M0 -2.200V-4.600" transform="rotate(0)"/><path d="M0 -2.200V-4.600" transform="rotate(45)"/><path d="M0 -2.200V-4.600" transform="rotate(90)"/><path d="M0 -2.200V-4.600" transform="rotate(135)"/><path d="M0 -2.200V-4.600" transform="rotate(180)"/><path d="M0 -2.200V-4.600" transform="rotate(225)"/><path d="M0 -2.200V-4.600" transform="rotate(270)"/><path d="M0 -2.200V-4.600" transform="rotate(315)"/></g></g><g transform="translate(11.5,13.5)"><circle r="2.100" fill="none" stroke="#3f78b8" stroke-width="1.100"/><g stroke="#3f78b8" stroke-width="1.100"><path d="M0 -2.200V-4.600" transform="rotate(0)"/><path d="M0 -2.200V-4.600" transform="rotate(45)"/><path d="M0 -2.200V-4.600" transform="rotate(90)"/><path d="M0 -2.200V-4.600" transform="rotate(135)"/><path d="M0 -2.200V-4.600" transform="rotate(180)"/><path d="M0 -2.200V-4.600" transform="rotate(225)"/><path d="M0 -2.200V-4.600" transform="rotate(270)"/><path d="M0 -2.200V-4.600" transform="rotate(315)"/></g></g></svg>
</body></html>
